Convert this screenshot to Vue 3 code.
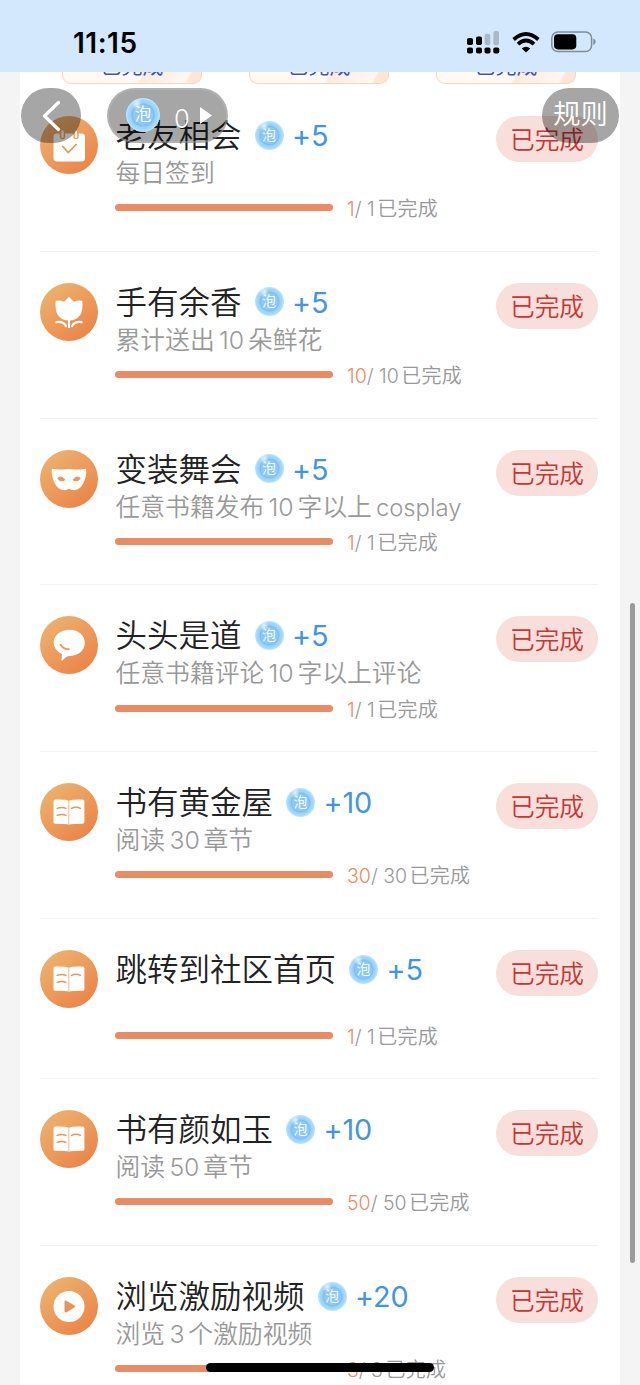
<script setup>
const parse = (s) => s.split(/(\d+)/).filter(Boolean).map((t) => ({ t, num: /^\d+$/.test(t) }))

const tasks = [
  { icon: 'calendar', title: '老友相会', plus: 5, sub: '每日签到', n: 1 },
  { icon: 'flower', title: '手有余香', plus: 5, sub: '累计送出10朵鲜花', n: 10 },
  { icon: 'mask', title: '变装舞会', plus: 5, sub: '任意书籍发布10字以上', latin: 'cosplay', n: 1 },
  { icon: 'chat', title: '头头是道', plus: 5, sub: '任意书籍评论10字以上评论', n: 1 },
  { icon: 'book', title: '书有黄金屋', plus: 10, sub: '阅读30章节', n: 30 },
  { icon: 'book', title: '跳转到社区首页', plus: 5, sub: '', n: 1 },
  { icon: 'book', title: '书有颜如玉', plus: 10, sub: '阅读50章节', n: 50 },
  { icon: 'play', title: '浏览激励视频', plus: 20, sub: '浏览3个激励视频', n: 3 },
].map((t) => ({ ...t, parts: parse(t.sub) }))
</script>

<template>
  <div class="screen">
    <header class="status">
      <span class="time">11:15</span>
      <div class="sys">
        <svg width="33" height="23" viewBox="0 0 33 23">
          <g fill="#000">
            <rect x="0" y="7" width="6" height="7" rx="1.8" /><rect x="9" y="5.5" width="6" height="8.5" rx="1.8" />
            <rect x="0" y="16.5" width="6" height="6" rx="1.8" /><rect x="9" y="16.5" width="6" height="6" rx="1.8" />
            <rect x="17.5" y="16.5" width="6" height="6" rx="1.8" /><rect x="26.3" y="16.5" width="6" height="6" rx="1.8" />
          </g>
          <g fill="#a9b9ca">
            <rect x="17.7" y="2.8" width="5.6" height="11.4" rx="1.8" /><rect x="26.4" y="0" width="5.6" height="14.2" rx="1.8" />
          </g>
        </svg>
        <svg class="wifi" width="28" height="21" viewBox="0 0 28 21" fill="none" stroke="#000" stroke-width="3.8">
          <path d="M1.6 7.5Q14-3.4 26.4 7.5" />
          <path d="M6 12.2Q14 5 22 12.2" />
          <path d="M14 20.6L9.8 16.4Q14 12.9 18.2 16.4Z" fill="#000" stroke="none" />
        </svg>
        <svg class="battery" width="46" height="22" viewBox="0 0 46 22">
          <rect x=".8" y="1" width="39.8" height="19.6" rx="6" fill="none" stroke="#7f8c98" stroke-width="1.5" />
          <rect x="3" y="3.2" width="22.3" height="15.2" rx="3.8" fill="#000" />
          <path d="M42.3 7.6q2.4 1 2.4 3.2t-2.4 3.2z" fill="#7f8c98" />
        </svg>
      </div>
    </header>

    <main class="card">
      <div class="chips">
        <div v-for="i in 3" :key="i" class="chip"><span>已完成</span></div>
      </div>
      <section v-for="(task, i) in tasks" :key="i" class="row" :class="{ short: !task.sub }">
        <svg class="icon" viewBox="0 0 58 58">
          <defs>
            <linearGradient :id="'g' + i" x1=".15" y1=".1" x2=".8" y2=".95">
              <stop offset="0" stop-color="#ecb16d" /><stop offset="1" stop-color="#ec8449" />
            </linearGradient>
          </defs>
          <circle cx="29" cy="29" r="29" :fill="`url(#g${i})`" />
          <g v-if="task.icon === 'calendar'">
            <rect x="13.5" y="17.5" width="31.5" height="28" rx="3.5" fill="#fff" />
            <g fill="none" stroke-linecap="round">
              <path d="M22.5 16.5v4M36 16.5v4" stroke="#eda263" stroke-width="5.4" />
              <path d="M22.5 15.5v5.5M36 15.5v5.5" stroke="#fff" stroke-width="2.2" />
              <path d="M22.8 30.5l5.4 6 8-8" stroke="#eb9559" stroke-width="1.7" />
            </g>
          </g>
          <g v-else-if="task.icon === 'flower'" fill="#fff">
            <path d="M29 14L34 18.7Q38 17 42.3 17.8Q43.2 28 40 32.3Q36 37.5 29 37.5Q22 37.5 18 32.3Q14.8 28 15.7 17.8Q20 17 24 18.7Z" />
            <path d="M28 36h2v9h-2z" />
            <path d="M16.5 39.2Q23.5 38 26 43.2M41.5 39.2Q34.5 38 32 43.2" fill="none" stroke="#fff" stroke-width="2.2" stroke-linecap="round" />
          </g>
          <g v-else-if="task.icon === 'mask'">
            <path d="M11.8 18.8Q17 20 22.5 19.4Q29 18.4 35.5 19.4Q41 20 46.2 18.8Q46.7 26.8 43.4 33Q40 40.3 33.8 40.3Q31 40.2 29 38.8Q27 40.2 24.2 40.3Q18 40.3 14.6 33Q11.3 26.8 11.8 18.8Z" fill="#fff" />
            <path d="M17.2 28.4Q20.5 24 25.6 30Q20.5 33 17.2 28.4ZM40.8 28.4Q37.5 24 32.4 30Q37.5 33 40.8 28.4Z" fill="#eb985c" />
          </g>
          <g v-else-if="task.icon === 'chat'">
            <path d="M29.5 13.8C38.5 13.8 44.8 19.4 44.8 26.8C44.8 35 37.5 40 29.5 40Q26 40 22.2 44.8Q21.5 45.2 21.6 43.5L22 38.2Q13.7 34 13.7 26.8C13.7 19.4 20.5 13.8 29.5 13.8Z" fill="#fff" />
            <path d="M20.6 28.8Q24.2 34 28.8 33.2" fill="none" stroke="#eb985c" stroke-width="1.9" stroke-linecap="round" />
          </g>
          <g v-else-if="task.icon === 'book'">
            <path d="M13.5 18.3Q13.5 16.6 15.5 16.5Q25 16 28.8 17.7Q32.5 16 42.5 16.5Q44.4 16.6 44.4 18.3V39.2Q44.4 40.7 42.5 40.7Q33 40.6 29 41.5Q25 40.6 15.5 40.7Q13.5 40.7 13.5 39.2Z" fill="#fff" />
            <path d="M28.8 18v23" stroke="#f2b083" stroke-width=".9" />
            <path d="M17.2 25.4Q22 23.5 26 25.3M31.5 25.4Q36 23.2 40.5 25.3M17.2 32.4Q22 30.5 26 32.3" fill="none" stroke="#eb9358" stroke-width="1.4" stroke-linecap="round" />
          </g>
          <g v-else>
            <circle cx="29" cy="29.5" r="15.5" fill="#fff" />
            <path d="M25.8 24.8v9.4l8-4.7z" fill="#eb9257" stroke="#eb9257" stroke-width="2.6" stroke-linejoin="round" />
          </g>
        </svg>
        <div class="body">
          <div class="head">
            <span class="title">{{ task.title }}</span>
            <span class="coin">泡</span>
            <span class="plus">+{{ task.plus }}</span>
          </div>
          <div class="sub"><span v-for="(p, k) in task.parts" :key="k" :class="{ num: p.num }">{{ p.t }}</span><span v-if="task.latin" class="latin">{{ task.latin }}</span></div>
          <div class="progress">
            <div class="bar"></div>
            <div class="count"><span class="now">{{ task.n }}</span><span>/ {{ task.n }}</span><span class="done">已完成</span></div>
          </div>
        </div>
        <div class="badge">已完成</div>
      </section>
    </main>

    <div class="float back">
      <svg width="20" height="32" viewBox="0 0 20 32" fill="none" stroke="#fff" stroke-width="3.2" stroke-linecap="round" stroke-linejoin="round"><path d="M17.5 2.5L3.5 16L17.5 29.5" /></svg>
    </div>
    <div class="float wallet">
      <span class="coin big">泡</span>
      <span class="zero">0</span>
      <svg width="12" height="17" viewBox="0 0 12 17"><path d="M0 0L12 8.5L0 17Z" fill="#fff" /></svg>
    </div>
    <div class="float rules">规则</div>
    <div class="scroll"></div>
    <div class="home"></div>
  </div>
</template>

<style>
body { margin: 0; }
</style>

<style scoped>
.screen {
  position: relative;
  width: 640px;
  height: 1385px;
  overflow: hidden;
  background: #f4f4f4;
  font-family: Inter, "Noto Sans CJK SC", sans-serif;
  font-weight: 350;
  white-space: nowrap;
}
.status {
  height: 72px;
  background: #d3e8fd;
  display: flex;
  justify-content: space-between;
  box-sizing: border-box;
  padding: 0 43px 0 73px;
}
.time { font-size: 28px; line-height: 86px; font-weight: 600; color: #000; letter-spacing: .5px; }
.sys { display: flex; padding-top: 31px; }
.wifi { margin: 1px 0 0 12px; }
.battery { margin: 0 0 0 11px; }
.card { margin: 0 20px; height: 1313px; background: #fff; overflow: hidden; }
.chips { height: 13.1px; padding-left: 42px; display: flex; gap: 47px; }
.chip {
  width: 140px;
  height: 12px;
  box-sizing: border-box;
  border: 1.5px solid #f8d6bb;
  border-top: 0;
  border-radius: 0 0 9px 9px;
  background: linear-gradient(120deg, #fffaf5 55%, #fcebdc 57%, #fff8f1 88%, #fce7d6 90%);
  color: #3c57bd;
  font-size: 21px;
  font-weight: 400;
  text-align: center;
  overflow: hidden;
}
.chip span { display: block; line-height: 30px; margin-top: -21px; }
.row {
  height: 166.8px;
  box-sizing: border-box;
  margin: 0 22px 0 20px;
  padding-top: 31px;
  border-bottom: 1.5px solid #f3f3f3;
  display: flex;
}
.row.short { height: 160.2px; }
.icon { width: 58px; height: 58px; flex: none; }
.body { flex: 1; padding-left: 17px; display: flex; flex-direction: column; }
.head { height: 38px; display: flex; align-items: center; }
.title { font-size: 31.5px; line-height: 38px; color: #222; padding-top: 2px; margin-left: .5px; }
.coin {
  width: 29px;
  height: 29px;
  box-sizing: border-box;
  margin: 0 0 0 13px;
  border-radius: 50%;
  background:
    radial-gradient(ellipse at 32% 18%, rgba(255, 255, 255, .75) 0, rgba(255, 255, 255, 0) 16%),
    radial-gradient(circle at 50% 50%, #8bc8f4 0 40%, #7abdf0 45%, #96d1f8 51%, #a4d9fb 62%, #bde6fd 70%);
  color: #fff;
  font-size: 14px;
  line-height: 28px;
  text-align: center;
}
.plus { font-size: 28.8px; color: #4395e3; margin: 1px 0 0 8.5px; letter-spacing: -.1px; font-weight: 400; }
.sub { height: 37px; font-size: 24.8px; line-height: 39px; color: #999; margin-left: .5px; }
.short .sub { height: 30.5px; }
.num { margin: 0 3.8px 0 4.3px; }
.latin { margin-left: 4px; font-size: 23.8px; }
.progress { height: 33.4px; display: flex; align-items: center; }
.bar { width: 218px; height: 7px; border-radius: 4px; background: #e98b63; }
.count { margin-left: 14px; font-size: 19.5px; color: #999; }
.now { color: #ea8c63; }
.done { margin-left: 2.5px; font-size: 20px; letter-spacing: .3px; }
.badge {
  width: 102px;
  height: 46px;
  box-sizing: border-box;
  padding-top: 1px;
  flex: none;
  border-radius: 23px;
  background: #f8dfdb;
  color: #c63632;
  font-size: 24.7px;
  line-height: 47px;
  text-align: center;
}
.float {
  position: absolute;
  top: 88px;
  height: 55px;
  border-radius: 28px;
  background: rgba(0, 0, 0, .35);
  display: flex;
  align-items: center;
  color: #fff;
}
.back { left: 21px; width: 60px; }
.back svg { margin-left: 20px; }
.wallet { left: 107px; width: 121px; box-sizing: border-box; border: 2px solid rgba(190, 190, 190, .45); }
.coin.big { width: 34px; height: 34px; font-size: 17px; line-height: 33px; margin-left: 17px; margin-bottom: 2px; }
.zero { font-size: 25.5px; margin: 5px 10px 0 14px; }
.rules { left: 542px; width: 77px; justify-content: center; font-size: 27.3px; line-height: 53px; align-items: flex-start; }
.scroll { position: absolute; left: 630px; top: 603px; width: 5px; height: 660px; border-radius: 3px; background: #9a9a9a; }
.home { position: absolute; left: 206px; top: 1363px; width: 228px; height: 9px; border-radius: 5px; background: #000; }
</style>
